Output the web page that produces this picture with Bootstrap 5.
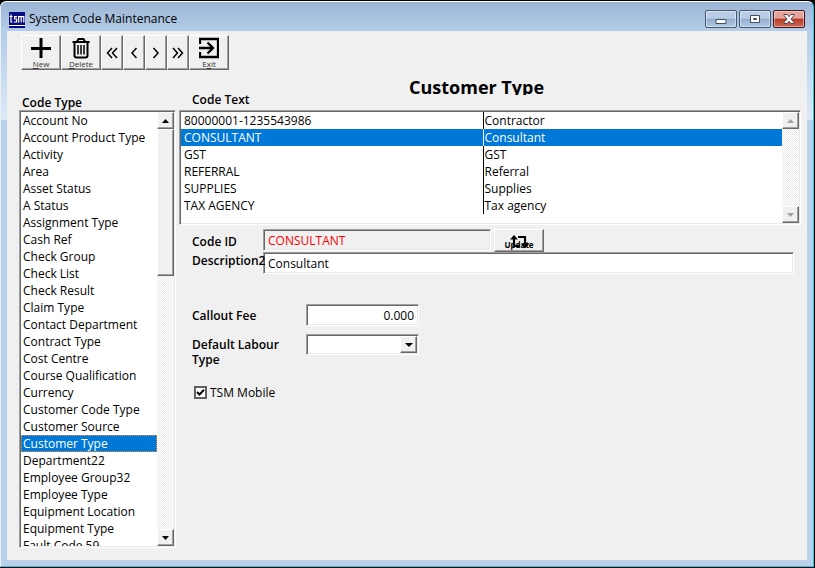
<!DOCTYPE html>
<html lang="en">
<head>
<meta charset="utf-8">
<meta name="viewport" content="width=device-width, initial-scale=1">
<title>System Code Maintenance</title>
<link rel="stylesheet" href="https://cdn.jsdelivr.net/npm/bootstrap@5.3.0/dist/css/bootstrap.min.css">
<style>
  body { background: #1f2a38; font-family: "Open Sans", "Noto Sans", sans-serif; font-size: 12px; line-height: 17px; color: #000; }
  .app-window { border: 1px solid #fff; border-color: #fff #28c4e4 #28c4e4 #e9f2fb; border-radius: 6px 6px 0 0; padding: 0 6px 6px;
    background: linear-gradient(#9ab5d4 0, #b4cde8 29px, #dde9f6 118px, #b9d1ea 118px); }
  .page-edge { padding: 1px 1px 1px 0; background: #000; }
  .title-bar { height: 29px; padding: 6px 2px 0 2px; }
  .win-title { font-size: 12px; }
  .win-btns { margin-top: -2px; gap: 2px; }
  .win-btn { width: 32px; height: 18px; border: 1px solid #46586f; border-radius: 2px; box-shadow: inset 0 0 0 1px #ffffff70;
    background: linear-gradient(#b9cee6 0 45%, #94afcd 50%, #aec8e4); }
  .win-close { border-color: #4a1016; background: linear-gradient(#e3a39a 0 45%, #bb3a24 50%, #c9695a); }
  .client-area { background: #f0f0f0; padding: 4px 6px 12px 12px; }
  .raised { border: 1px solid; border-color: #fff #696969 #696969 #fff; box-shadow: inset -1px -1px #a0a0a0; background: #f0f0f0; border-radius: 0; color: #000; }
  .sunken { border: 1px solid; border-color: #a0a0a0 #fff #fff #a0a0a0; box-shadow: inset 1px 1px #696969, inset -1px -1px #e9e9e9; padding: 1px; background: #fff; }
  .tool-bar { padding-left: 2px; height: 35px; }
  .tool-btn { width: 40px; padding: 0; font-size: 8px; line-height: 8px; color: #333; }
  .tool-btn svg { display: block; margin: 0 auto; }
  .tool-nav { width: 22px; }
  .side-col { width: 157px; }
  .main-col { margin-left: 3px; }
  .head-side { height: 40px; padding-left: 3px; }
  .head-main { height: 40px; }
  .head-code { width: 230px; padding: 0 0 2px 13px; }
  .head-title { font-size: 18px; line-height: 24px; height: 20px; margin-top: 5px; }
  .code-list { min-height: 0; }
  .code-list .list-group-item { border: 0; padding: 0 2px; height: 17px; font-size: 12px; line-height: 17px; color: #000; white-space: nowrap; flex: none; background: #fff; }
  .code-list .list-group-item.active { background: #0078d7; color: #fff; outline: 1px dotted #f09030; outline-offset: -1px; margin-top: 0; }
  .scroll-track { width: 17px; flex: none; background: repeating-conic-gradient(#fff 0 25%, #ececec 0 50%) 0 0 / 2px 2px; }
  .scroll-btn { width: 17px; height: 17px; padding: 0; }
  .scroll-thumb { height: 147px; }
  .text-panel { height: 115px; }
  .code-table { font-size: 12px; line-height: 17px; table-layout: fixed; align-self: flex-start; }
  .code-table td { padding: 0 1px; height: 17px; }
  .code-table td:first-child { padding-left: 3px; width: 302px; border-right: 1px solid #000; }
  .code-table tr.picked td { background: #0078d7; color: #fff; }
  .code-table tr.picked td:first-child { border-right-color: #fff; }
  .form-area { padding: 4px 7px 0 13px; }
  .form-area label, .form-area input, .form-area select { font-size: 12px; }
  .label-a { width: 71px; white-space: nowrap; }
  .label-a, .label-b, .head-code, .head-side span { font-weight: 600; }
  .label-b { width: 114px; line-height: 15px; padding-right: 20px; }
  .entry { height: 22px; padding: 1px 4px 0; border-radius: 0; outline: 0; color: #000; }
  .entry-id { width: 228px; background: #f0f0f0; color: #f00; }
  .entry-fee { width: 113px; }
  .update-btn { width: 50px; height: 23px; padding: 0; margin-left: 3px; font-size: 8px; line-height: 9px; }
  .fee-row { margin-top: 30px; }
  .type-row { margin-top: 8px; }
  .type-row label { padding-top: 3px; }
  .combo { width: 113px; height: 21px; }
  .combo select { appearance: none; border: 0; outline: 0; background: #fff; min-width: 0; }
  .mobile-row { margin-top: 17px; gap: 3px; padding-left: 2px; }
  .mobile-row input { appearance: none; width: 13px; height: 13px; margin: 0; border: 2px solid #606060; background: #fff; }
  .check-tick { position: absolute; left: 2px; top: 2px; pointer-events: none; }
</style>
<script src="https://cdn.jsdelivr.net/npm/bootstrap@5.3.0/dist/js/bootstrap.bundle.min.js"></script>
</head>
<body>
<div class="page-edge vh-100 d-flex">
<div class="app-window d-flex flex-column flex-fill">
  <header class="title-bar d-flex align-items-center flex-shrink-0">
    <svg width="16" height="16" viewBox="0 0 16 16" class="me-1" aria-hidden="true"><path fill="#0b0b80" d="M0 0h16v16H0z"/><path fill="none" stroke="#fff" stroke-width="1.2" d="M2 2.500v7.500h1.500M.5 4.500h3M8 4.600H5.600v2.400h2v3H5M9.600 10.500V4.600h5.200v5.900M12.200 5v5.500"/><path fill="#fff" d="M0 13h16v1H0z"/></svg>
    <h1 class="win-title fw-normal mb-0 me-auto">System Code Maintenance</h1>
    <div class="d-flex win-btns">
      <button class="win-btn p-0 d-flex align-items-center justify-content-center" aria-label="Minimize"><svg width="12" height="12"><path d="M1 6.500h10v4H1z" fill="#fff" stroke="#434e60"/></svg></button>
      <button class="win-btn p-0 d-flex align-items-center justify-content-center" aria-label="Maximize"><svg width="12" height="10"><path d="M1.500 1.500h9v7h-9zM4.500 4.500h3v1h-3z" fill="#fff" stroke="#434e60"/></svg></button>
      <button class="win-btn win-close p-0 d-flex align-items-center justify-content-center" aria-label="Close"><svg width="12" height="10"><path d="M1 .5h3L6 2.700 8 .5h3v1L8 5l3 3.500v1H8L6 7.300 4 9.500H1v-1L4 5 1 1.500z" fill="#fff" stroke="#50404c"/></svg></button>
    </div>
  </header>

  <main class="client-area d-flex flex-column flex-fill overflow-hidden">
    <nav class="tool-bar d-flex flex-shrink-0" aria-label="Record tools">
      <button class="raised tool-btn"><svg width="20" height="23" viewBox="0 0 20 23"><path d="M10 1v20M0 11.500h20" stroke="#000" stroke-width="3"/></svg><u>N</u>ew</button>
      <button class="raised tool-btn"><svg width="20" height="23" viewBox="0 0 20 23"><path d="M1.500 5h17M6 4.500 7.500 2h5L14 4.500M3.500 5v13.500a2 2 0 0 0 2 2h9a2 2 0 0 0 2-2V5" fill="none" stroke="#000" stroke-width="2"/><path d="M7 8v9.500M10 8v9.500M13 8v9.500" stroke="#000" stroke-width="1.500"/></svg><u>D</u>elete</button>
      <button class="raised tool-btn tool-nav" aria-label="First"><svg width="12" height="12" viewBox="0 0 12 12"><path d="M6 1 1.500 6 6 11M11 1 6.500 6l4.500 5" fill="none" stroke="#000" stroke-width="1.500"/></svg></button>
      <button class="raised tool-btn tool-nav" aria-label="Previous"><svg width="12" height="12" viewBox="0 0 12 12"><path d="M8.500 1 4 6l4.500 5" fill="none" stroke="#000" stroke-width="1.500"/></svg></button>
      <button class="raised tool-btn tool-nav" aria-label="Next"><svg width="12" height="12" viewBox="0 0 12 12"><path d="M3.500 1 8 6l-4.500 5" fill="none" stroke="#000" stroke-width="1.500"/></svg></button>
      <button class="raised tool-btn tool-nav" aria-label="Last"><svg width="12" height="12" viewBox="0 0 12 12"><path d="M1 1l4.500 5L1 11M6 1l4.500 5L6 11" fill="none" stroke="#000" stroke-width="1.500"/></svg></button>
      <button class="raised tool-btn"><svg width="20" height="23" viewBox="0 0 20 23"><path d="M1 7V2h18v18H1v-5M0 11h13M8.500 5.500 14 11l-5.500 5.500" fill="none" stroke="#000" stroke-width="2.300"/></svg>E<u>x</u>it</button>
    </nav>

    <div class="d-flex flex-fill overflow-hidden">
      <section class="side-col d-flex flex-column flex-shrink-0">
        <h2 class="head-side fs-6 mb-0 d-flex align-items-end flex-shrink-0"><span class="win-title">Code Type</span></h2>
        <div class="sunken d-flex flex-fill code-list">
          <div class="list-group list-group-flush rounded-0 flex-fill overflow-hidden" id="codeTypes">
            <button class="list-group-item list-group-item-action">Account No</button>
            <button class="list-group-item list-group-item-action">Account Product Type</button>
            <button class="list-group-item list-group-item-action">Activity</button>
            <button class="list-group-item list-group-item-action">Area</button>
            <button class="list-group-item list-group-item-action">Asset Status</button>
            <button class="list-group-item list-group-item-action">A Status</button>
            <button class="list-group-item list-group-item-action">Assignment Type</button>
            <button class="list-group-item list-group-item-action">Cash Ref</button>
            <button class="list-group-item list-group-item-action">Check Group</button>
            <button class="list-group-item list-group-item-action">Check List</button>
            <button class="list-group-item list-group-item-action">Check Result</button>
            <button class="list-group-item list-group-item-action">Claim Type</button>
            <button class="list-group-item list-group-item-action">Contact Department</button>
            <button class="list-group-item list-group-item-action">Contract Type</button>
            <button class="list-group-item list-group-item-action">Cost Centre</button>
            <button class="list-group-item list-group-item-action">Course Qualification</button>
            <button class="list-group-item list-group-item-action">Currency</button>
            <button class="list-group-item list-group-item-action">Customer Code Type</button>
            <button class="list-group-item list-group-item-action">Customer Source</button>
            <button class="list-group-item list-group-item-action active" aria-current="true">Customer Type</button>
            <button class="list-group-item list-group-item-action">Department22</button>
            <button class="list-group-item list-group-item-action">Employee Group32</button>
            <button class="list-group-item list-group-item-action">Employee Type</button>
            <button class="list-group-item list-group-item-action">Equipment Location</button>
            <button class="list-group-item list-group-item-action">Equipment Type</button>
            <button class="list-group-item list-group-item-action">Fault Code 59</button>
          </div>
          <div class="scroll-track d-flex flex-column">
            <button class="raised scroll-btn d-flex align-items-center justify-content-center" aria-label="Scroll up"><svg width="7" height="4"><path d="M0 4 3.500 0 7 4z"/></svg></button>
            <div class="raised scroll-thumb"></div>
            <button class="raised scroll-btn d-flex align-items-center justify-content-center mt-auto" aria-label="Scroll down"><svg width="7" height="4"><path d="M0 0h7L3.500 4z"/></svg></button>
          </div>
        </div>
      </section>

      <section class="main-col d-flex flex-column flex-fill">
        <div class="head-main d-flex">
          <div class="head-code align-self-end">Code Text</div>
          <h2 class="head-title fw-bold mb-0 overflow-hidden">Customer Type</h2>
        </div>
        <div class="sunken text-panel d-flex">
          <table class="code-table w-100">
            <tbody>
              <tr><td>80000001-1235543986</td><td>Contractor</td></tr>
              <tr class="picked"><td>CONSULTANT</td><td>Consultant</td></tr>
              <tr><td>GST</td><td>GST</td></tr>
              <tr><td>REFERRAL</td><td>Referral</td></tr>
              <tr><td>SUPPLIES</td><td>Supplies</td></tr>
              <tr><td>TAX AGENCY</td><td>Tax agency</td></tr>
            </tbody>
          </table>
          <div class="scroll-track d-flex flex-column justify-content-between">
            <button class="raised scroll-btn d-flex align-items-center justify-content-center" aria-label="Scroll up" disabled><svg width="7" height="4"><path fill="#a0a0a0" d="M0 4 3.500 0 7 4z"/></svg></button>
            <button class="raised scroll-btn d-flex align-items-center justify-content-center" aria-label="Scroll down" disabled><svg width="7" height="4"><path fill="#a0a0a0" d="M0 0h7L3.500 4z"/></svg></button>
          </div>
        </div>

        <form class="form-area">
          <div class="d-flex align-items-start">
            <label class="label-a pt-1" for="codeId">Code ID</label>
            <input class="sunken entry entry-id" id="codeId" value="CONSULTANT" readonly>
            <button type="button" class="raised update-btn fw-bold position-relative">
              <span class="d-block pt-2">Update</span>
              <svg class="position-absolute top-0 start-50 translate-middle-x mt-1" width="20" height="16" viewBox="0 0 20 16" aria-hidden="true"><path d="M5 4v8h6M9 3h7v8" fill="none" stroke="#000" stroke-width="2.200"/><path d="M1 5.500 5 1l4 4.500zM12 10h8l-4 4.500z"/></svg>
            </button>
          </div>
          <div class="d-flex">
            <label class="label-a position-relative z-1" for="desc2">Description2</label>
            <input class="sunken entry flex-fill" id="desc2" value="Consultant">
          </div>
          <div class="d-flex align-items-center fee-row">
            <label class="label-b" for="fee">Callout Fee</label>
            <input class="sunken entry entry-fee text-end" id="fee" value="0.000">
          </div>
          <div class="d-flex type-row">
            <label class="label-b" for="labour">Default Labour Type</label>
            <div class="sunken combo d-flex">
              <select class="flex-fill" id="labour"><option></option></select>
              <span class="raised scroll-btn d-flex align-items-center justify-content-center flex-shrink-0"><svg width="8" height="4"><path d="M0 0h8L4 4z"/></svg></span>
            </div>
          </div>
          <div class="d-flex align-items-center mobile-row">
            <span class="position-relative d-flex"><input type="checkbox" id="mobile" checked><svg class="check-tick" width="9" height="9" aria-hidden="true"><path d="M1 4l2.500 2.500L8 1.800" fill="none" stroke="#000" stroke-width="2"/></svg></span>
            <label for="mobile">TSM Mobile</label>
          </div>
        </form>
      </section>
    </div>
  </main>
</div>
</div>
</body>
</html>
